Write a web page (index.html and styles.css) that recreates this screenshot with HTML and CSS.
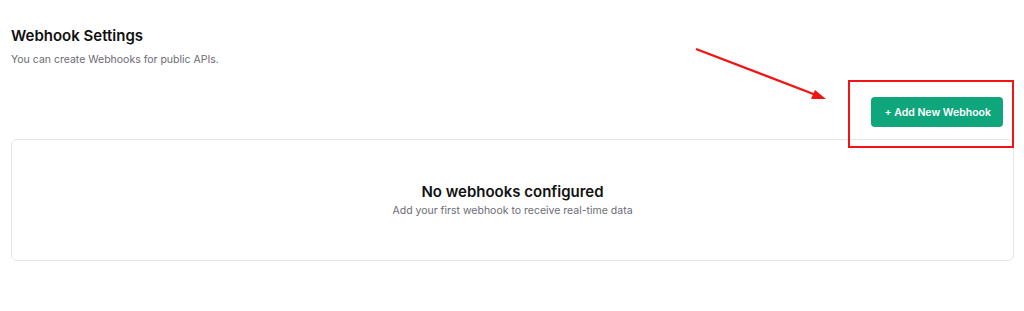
FILE: index.html
```html
<!DOCTYPE html>
<html>
<head>
<meta charset="utf-8">
<link rel="stylesheet" href="styles.css">
</head>
<body>
<div class="page">
  <header class="head">
    <h1 class="title">Webhook Settings</h1>
    <p class="sub">You can create Webhooks for public APIs.</p>
  </header>
  <div class="actions">
    <button class="btn">+ Add New Webhook</button>
  </div>
  <section class="card">
    <h2 class="empty-title">No webhooks configured</h2>
    <p class="empty-sub">Add your first webhook to receive real-time data</p>
  </section>
</div>
<div class="hl-box"></div>
<svg class="arrow" width="1024" height="311" viewBox="0 0 1024 311">
  <line x1="696" y1="49" x2="816" y2="95" stroke="#f21414" stroke-width="2.4"/>
  <polygon points="826,99 811,99 815,90" fill="#f21414"/>
</svg>
</body>
</html>
```
FILE: styles.css
```css
* { box-sizing: border-box; }
html, body { margin: 0; padding: 0; background: #fff; }
body { font-family: Inter, "Noto Sans", sans-serif; color: #111; }
.page { padding: 26px 10px 0 11px; }
.title { margin: 0; font-size: 15px; font-weight: 600; line-height: 20px; color: #111; }
.sub { margin: 7px 0 0; font-size: 10.5px; line-height: 14px; color: #6b6b73; }
.actions { display: flex; justify-content: flex-end; padding-right: 11px; margin-top: 30px; }
.btn { height: 30px; padding: 0 12px 0 13px; border: none; border-radius: 4px; background: #10a67c; color: #fff; font-family: Inter, sans-serif; font-size: 10.5px; font-weight: 600; }
.card { margin-top: 12px; height: 122px; border: 1px solid #e6e6e8; border-radius: 6px; display: flex; flex-direction: column; align-items: center; justify-content: center; }
.empty-title { margin: 0; font-size: 15px; font-weight: 600; line-height: 20px; color: #111; }
.empty-sub { margin: 2px 0 0; font-size: 10.5px; line-height: 14px; color: #6b6b73; }
.hl-box { position: absolute; left: 848px; top: 80px; width: 166px; height: 68px; border: 2px solid #f21414; }
.arrow { position: absolute; left: 0; top: 0; pointer-events: none; }
```
